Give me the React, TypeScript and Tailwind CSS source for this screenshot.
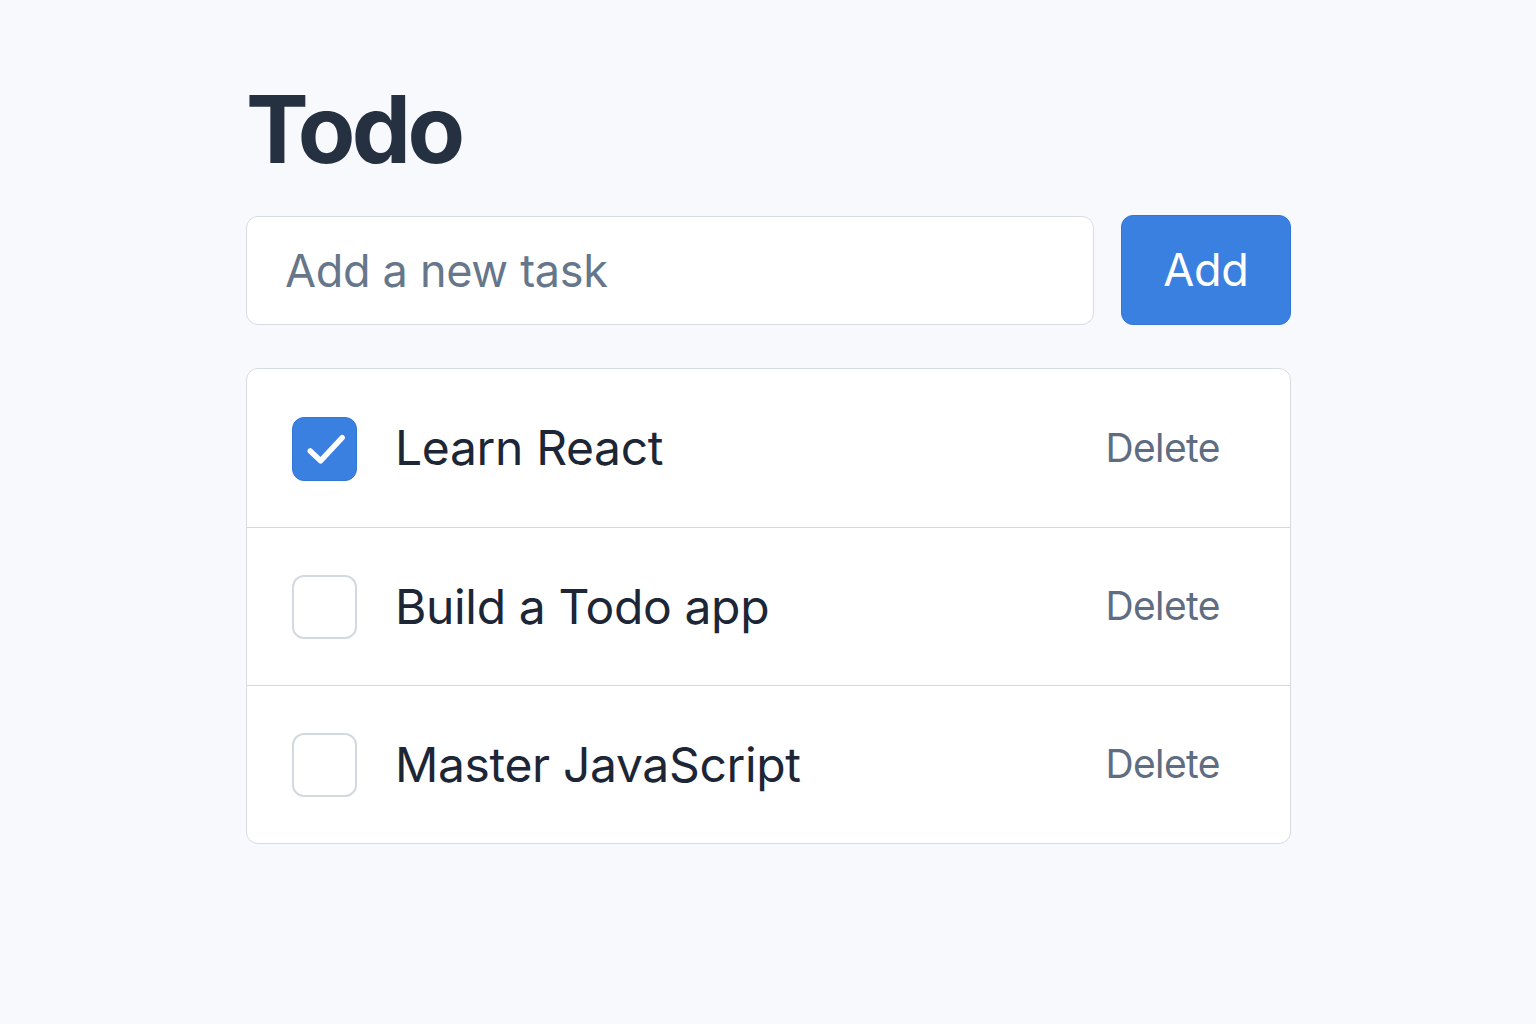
import React, { useState } from 'react';

interface Todo {
  id: number;
  text: string;
  done: boolean;
}

const initial: Todo[] = [
  { id: 1, text: 'Learn React', done: true },
  { id: 2, text: 'Build a Todo app', done: false },
  { id: 3, text: 'Master JavaScript', done: false },
];

export default function App() {
  const [todos, setTodos] = useState<Todo[]>(initial);
  const [text, setText] = useState('');

  const add = () => {
    if (!text.trim()) return;
    setTodos([...todos, { id: Date.now(), text: text.trim(), done: false }]);
    setText('');
  };

  const toggle = (id: number) =>
    setTodos(todos.map(t => (t.id === id ? { ...t, done: !t.done } : t)));

  const remove = (id: number) => setTodos(todos.filter(t => t.id !== id));

  return (
    <div
      className="min-h-screen bg-[#f7f9fc] pt-[82px]"
      style={{ fontFamily: 'Inter, "Noto Sans", sans-serif' }}
    >
      <div className="ml-[246px] w-[1045px]">
        <h1 className="text-[94px] font-bold leading-none tracking-[-3.6px] text-[#253041]">Todo</h1>

        <div className="mt-[40px] flex gap-[27px]">
          <input
            value={text}
            onChange={e => setText(e.target.value)}
            onKeyDown={e => e.key === 'Enter' && add()}
            placeholder="Add a new task"
            className="h-[109px] flex-1 rounded-[12px] border-[1.5px] border-[#d7dce3] bg-white pl-[38px] text-[45px] tracking-[-0.3px] text-[#253041] outline-none placeholder:text-[#66768b]"
          />
          <button
            onClick={add}
            className="h-[110px] w-[170px] -mt-px rounded-[12px] border border-[#3276d6] bg-[#3a80e0] text-[45px] tracking-[-0.3px] text-white"
          >
            Add
          </button>
        </div>

        <ul className="mt-[43px] overflow-hidden rounded-[12px] border-[1.5px] border-[#d7dce3] bg-white">
          {todos.map((t, i) => (
            <li
              key={t.id}
              className={`flex h-[158px] items-center pl-[45px] pr-[70px] ${i > 0 ? 'border-t-[1.5px] border-[#d3d9e1]' : ''}`}
            >
              <button
                onClick={() => toggle(t.id)}
                className={
                  t.done
                    ? 'mt-px flex h-[64px] w-[65px] items-center justify-center rounded-[12px] border border-[#3276d6] bg-[#3a80e0]'
                    : 'h-[64px] w-[65px] rounded-[12px] border-2 border-[#d3d9e1] bg-white'
                }
              >
                {t.done && (
                  <svg width="64" height="64" viewBox="0 0 64 64" fill="none">
                    <path
                      d="M17.5 34 L28 44 L50 20.5"
                      stroke="white"
                      strokeWidth="5.5"
                      strokeLinecap="round"
                      strokeLinejoin="round"
                    />
                  </svg>
                )}
              </button>
              <span className="ml-[38px] flex-1 text-[48px] tracking-[-0.35px] text-[#1c2636]">{t.text}</span>
              <button onClick={() => remove(t.id)} className="text-[39px] tracking-[-0.6px] text-[#5e6d82]">
                Delete
              </button>
            </li>
          ))}
        </ul>
      </div>
    </div>
  );
}
